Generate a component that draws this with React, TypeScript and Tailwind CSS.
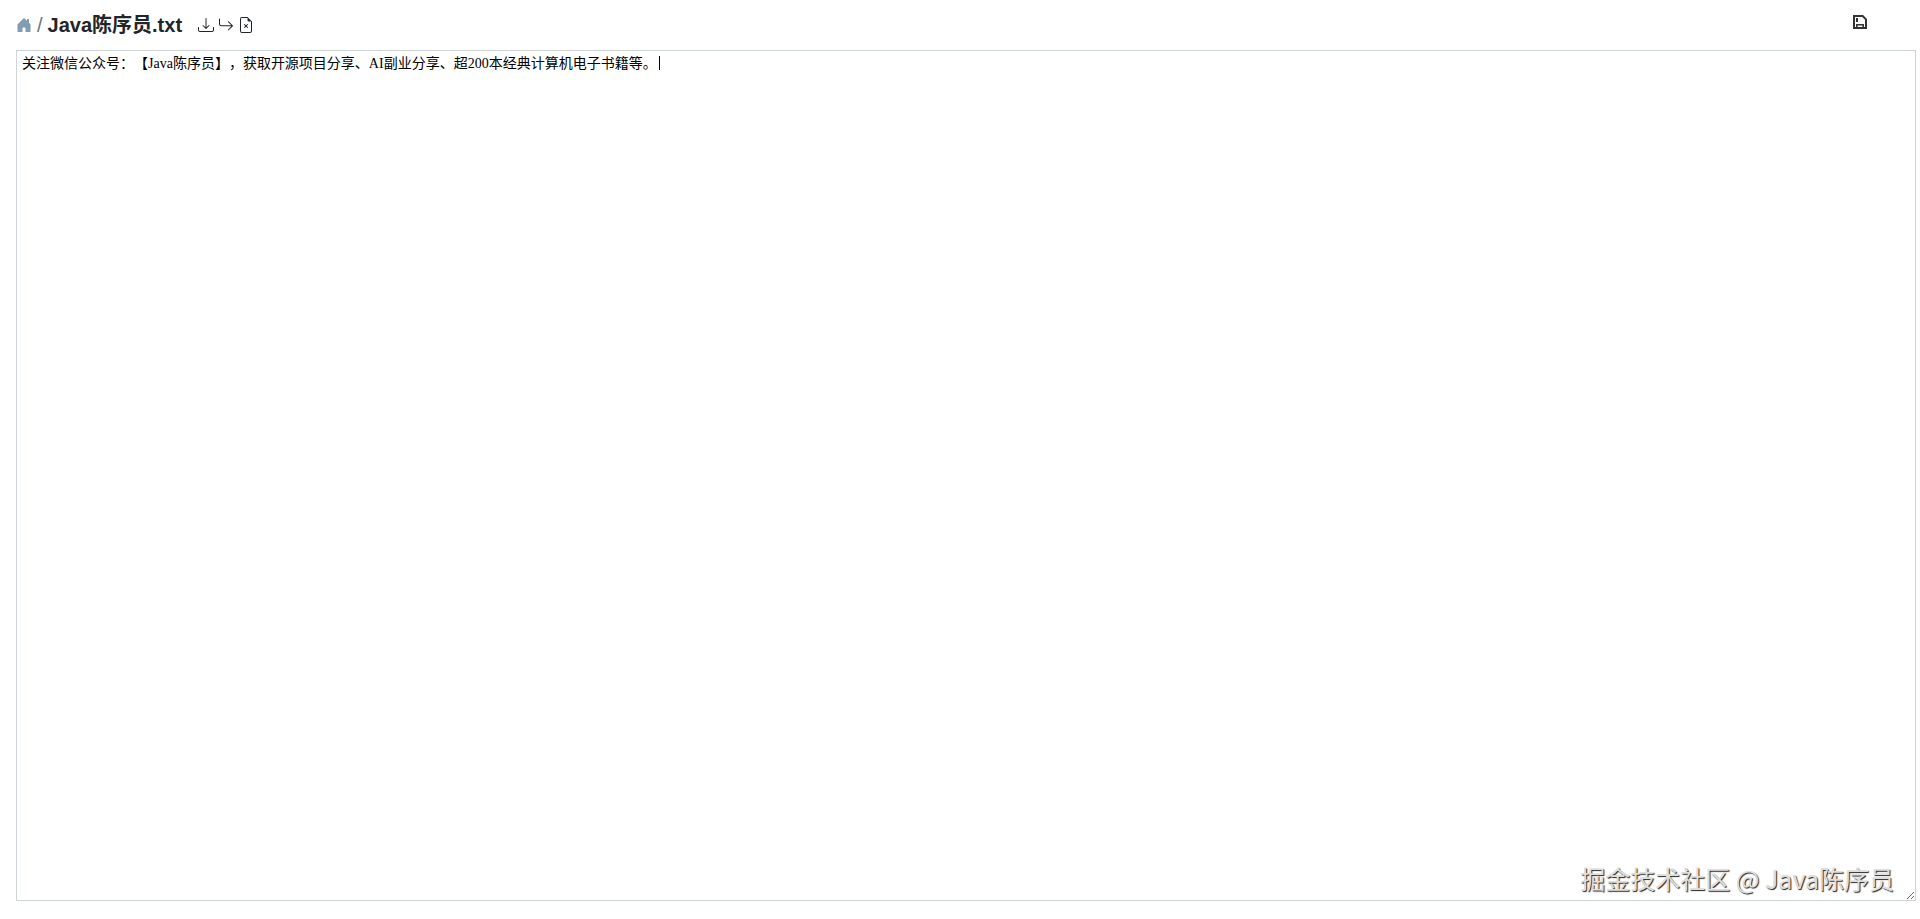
import { useState } from "react";
import {
  BsArrowReturnRight,
  BsDownload,
  BsFileEarmarkX,
  BsHouseDoorFill,
} from "react-icons/bs";

const FILE_NAME = "Java陈序员.txt";
const INITIAL_TEXT =
  "关注微信公众号：【Java陈序员】，获取开源项目分享、AI副业分享、超200本经典计算机电子书籍等。";

function SaveIcon() {
  return (
    <svg viewBox="0 0 14 14" className="size-3.5" fill="none" stroke="currentColor" aria-hidden="true">
      <path strokeWidth="2" d="M1 1h8.6L13 4.4V13H1z" />
      <path strokeWidth="2" d="M4 3v4" />
      <path strokeWidth="1.6" d="M3.8 13V9.8h6.4V13" />
    </svg>
  );
}

export default function App() {
  const [text, setText] = useState(INITIAL_TEXT);

  return (
    <div className="flex h-screen flex-col bg-white pr-1 pb-[18px] pl-4 font-['Liberation_Sans','Noto_Sans_CJK_SC',sans-serif] text-[#212529]">
      <header className="flex h-[50px] shrink-0 items-center justify-between pr-[49px]">
        <div className="flex items-center">
          <nav className="flex items-center gap-[5px] text-xl">
            <a href="#home" aria-label="Home" className="text-[#819db4]">
              <BsHouseDoorFill className="size-4" />
            </a>
            <span className="text-[#6c757d]">/</span>
            <h1 className="font-bold">{FILE_NAME}</h1>
          </nav>
          <div className="ml-4 flex items-center gap-1">
            <button type="button" aria-label="Download">
              <BsDownload className="size-4" />
            </button>
            <button type="button" aria-label="Move">
              <BsArrowReturnRight className="size-4" />
            </button>
            <button type="button" aria-label="Delete">
              <BsFileEarmarkX className="size-4" />
            </button>
          </div>
        </div>
        <button type="button" aria-label="Save" className="mb-1.5 text-[#333333]">
          <SaveIcon />
        </button>
      </header>
      <main className="relative flex grow">
        <textarea
          aria-label="File content"
          spellCheck={false}
          value={text}
          onChange={(e) => setText(e.target.value)}
          className="grow resize border border-[#ced4da] px-[5px] pt-[5px] pb-1 font-['Liberation_Serif','Noto_Sans_CJK_SC',serif] text-sm leading-4 text-black outline-none [text-spacing-trim:space-all]"
        />
        <span aria-hidden="true" className="absolute top-1.5 left-[643px] h-3.5 w-px bg-black" />
        <p className="pointer-events-none absolute right-[22px] bottom-[7px] font-['Noto_Sans_CJK_SC',sans-serif] text-[25px] leading-8 text-[#dedede] [text-shadow:1px_1px_1px_#222]">
          掘金技术社区 @ Java陈序员
        </p>
      </main>
    </div>
  );
}
